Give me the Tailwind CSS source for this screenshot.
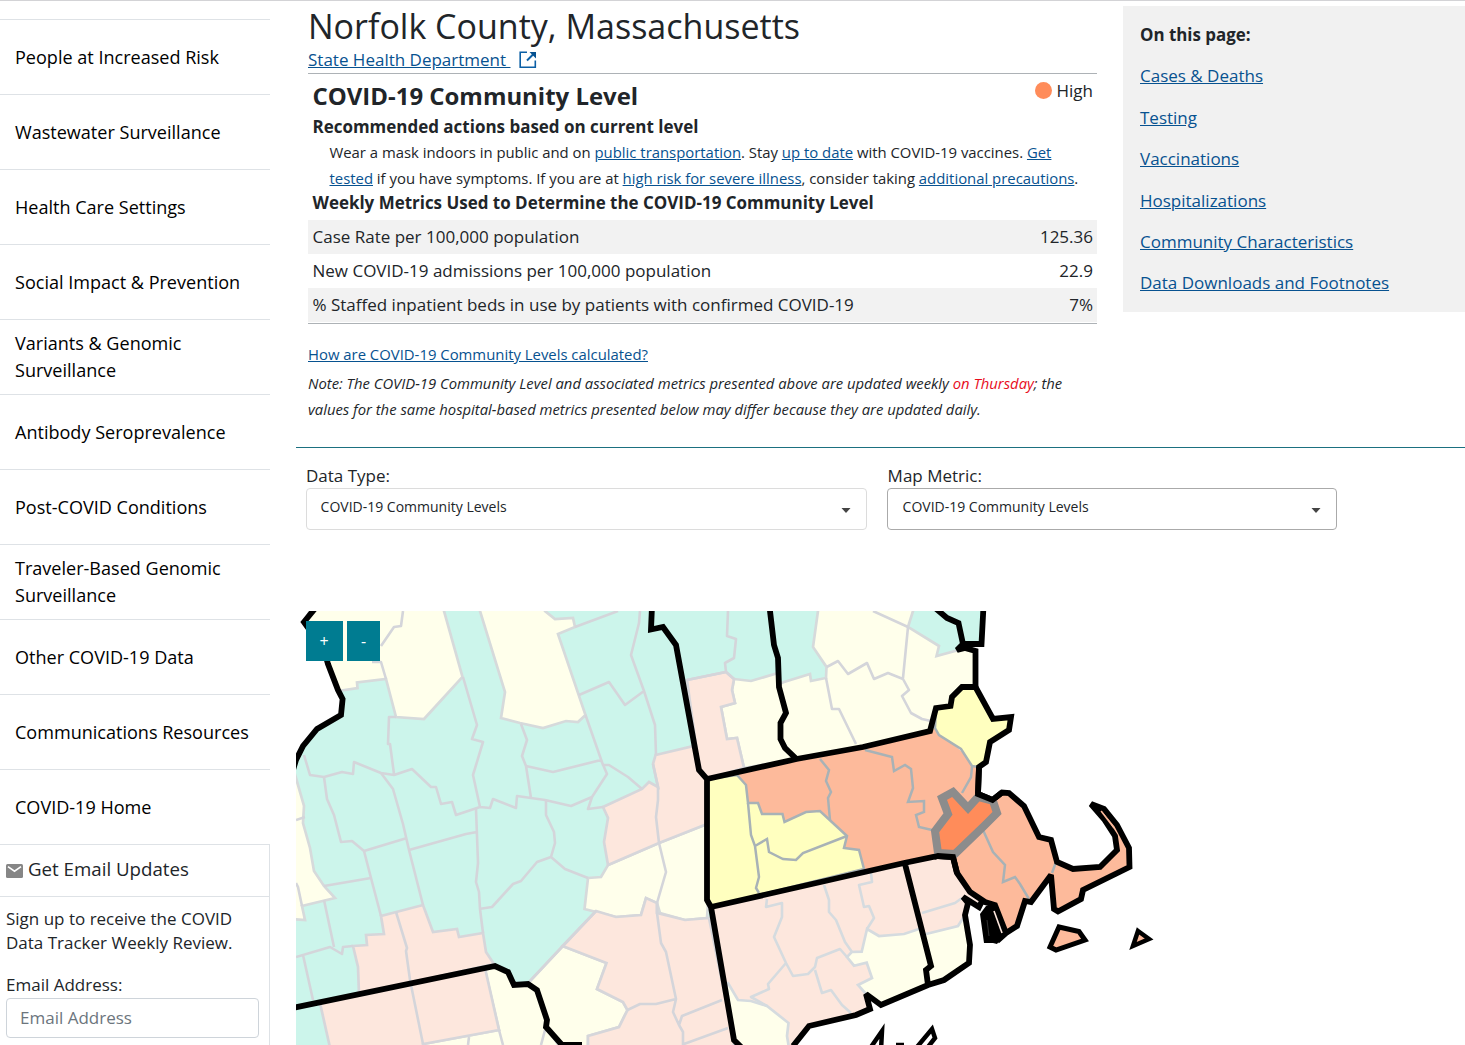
<!DOCTYPE html>
<html lang="en">
<head>
<meta charset="utf-8">
<title>COVID-19 County View</title>
<script src="https://cdn.jsdelivr.net/npm/@tailwindcss/browser@4"></script>
</head>
<body class="h-[1045px] overflow-hidden bg-white font-['Open_Sans',sans-serif] text-[17px] text-[#212529]">
<div class="flex h-[1045px] border-t border-[#d3d3d6]">
  <aside class="w-[270px] shrink-0">
    <nav class="text-[18.06px] leading-[27px] text-black">
      <div class="h-[19px] border-b border-[#dee2e6]"></div>
      <a class="flex h-[75px] items-center border-b border-[#dee2e6] px-[15px]">People at Increased Risk</a>
      <a class="flex h-[75px] items-center border-b border-[#dee2e6] px-[15px]">Wastewater Surveillance</a>
      <a class="flex h-[75px] items-center border-b border-[#dee2e6] px-[15px]">Health Care Settings</a>
      <a class="flex h-[75px] items-center border-b border-[#dee2e6] px-[15px]">Social Impact &amp; Prevention</a>
      <a class="flex h-[75px] items-center border-b border-[#dee2e6] px-[15px]">Variants &amp; Genomic<br>Surveillance</a>
      <a class="flex h-[75px] items-center border-b border-[#dee2e6] px-[15px]">Antibody Seroprevalence</a>
      <a class="flex h-[75px] items-center border-b border-[#dee2e6] px-[15px]">Post-COVID Conditions</a>
      <a class="flex h-[75px] items-center border-b border-[#dee2e6] px-[15px]">Traveler-Based Genomic<br>Surveillance</a>
      <a class="flex h-[75px] items-center border-b border-[#dee2e6] px-[15px]">Other COVID-19 Data</a>
      <a class="flex h-[75px] items-center border-b border-[#dee2e6] px-[15px]">Communications Resources</a>
      <a class="flex h-[75px] items-center border-b border-[#dee2e6] px-[15px]">COVID-19 Home</a>
    </nav>
    <section class="h-[201px] border-r border-[#dee2e6]">
      <h2 class="flex h-[52px] items-center gap-[5px] border-b border-[#dee2e6] pb-[2px] pl-[6px] text-[18.7px]">
        <svg class="mt-[3px] h-[14px] w-[17px]" viewBox="0 0 17 14"><rect width="17" height="14" rx="1.5" fill="#868686"/><path d="M2 2.6 8.5 7.2 15 2.6" fill="none" stroke="#fff" stroke-width="1.6"/></svg>
        Get Email Updates
      </h2>
      <p class="pt-[10px] pl-[6px] leading-6 whitespace-nowrap">Sign up to receive the COVID<br>Data Tracker Weekly Review.</p>
      <label class="mt-[18px] block pl-[6px] leading-6">Email Address:</label>
      <div class="mt-px ml-[6px] flex h-[40px] w-[253px] items-center rounded border border-[#ced4da] px-[13px] text-[#6c757d]">Email Address</div>
    </section>
  </aside>

  <main class="ml-[26px] flex w-[1169px] flex-col">
    <div class="flex h-[447px] border-b border-[#1b7080]">
      <section class="ml-[12px] w-[789px] shrink-0">
        <h1 class="h-[46px] text-[34px] leading-[50px] whitespace-nowrap">Norfolk County, Massachusetts</h1>
        <div class="flex h-[27px] items-center gap-[8px] border-b border-[#adb2b6] text-[17px] text-[#075290]">
          <a class="whitespace-pre underline">State Health Department </a>
          <svg class="h-[18px] w-[18px]" viewBox="0 0 18 18" fill="none" stroke="#0b5fa5"><path d="M8 1.2H1.2V16.3H16.3V9.5" stroke-width="1.6"/><path d="M8 9.5 15 2.5" stroke-width="2"/><path d="M10.5 1H17V7.5Z" fill="#075290" stroke="none"/></svg>
        </div>
        <div class="flex justify-between pr-[4px] pl-[4.5px]">
          <h2 class="h-[40px] text-[23.94px] leading-[44px] font-bold">COVID-19 Community Level</h2>
          <div class="flex h-[34px] items-center gap-[5px]"><span class="mb-px size-[17px] rounded-full bg-[#ff8c5a]"></span>High</div>
        </div>
        <h3 class="h-[26px] pl-[4.5px] text-[16.98px] leading-[26px] font-bold">Recommended actions based on current level</h3>
        <p class="-mt-px h-[53px] pl-[21.5px] text-[14.88px] leading-[26px] whitespace-nowrap">Wear a mask indoors in public and on <a class="text-[#075290] underline">public transportation</a>. Stay <a class="text-[#075290] underline">up to date</a> with COVID-19 vaccines. <a class="text-[#075290] underline">Get<br>tested</a> if you have symptoms. If you are at <a class="text-[#075290] underline">high risk for severe illness</a>, consider taking <a class="text-[#075290] underline">additional precautions</a>.</p>
        <h3 class="h-[28px] pl-[4.5px] text-[16.97px] leading-[22px] font-bold">Weekly Metrics Used to Determine the COVID-19 Community Level</h3>
        <div class="border-b border-[#adb2b6] leading-[34px]">
          <div class="flex h-[34px] justify-between bg-[#f2f2f2] pr-[4px] pl-[4.5px]"><span>Case Rate per 100,000 population</span><span>125.36</span></div>
          <div class="flex h-[34px] justify-between pr-[4px] pl-[4.5px]"><span>New COVID-19 admissions per 100,000 population</span><span>22.9</span></div>
          <div class="mb-px flex h-[34px] justify-between bg-[#f2f2f2] pr-[4px] pl-[4.5px]"><span>% Staffed inpatient beds in use by patients with confirmed COVID-19</span><span>7%</span></div>
        </div>
        <a class="mt-[17px] block text-[14.88px] leading-[26px] text-[#075290] underline">How are COVID-19 Community Levels calculated?</a>
        <p class="mt-[3px] text-[14.82px] leading-[26px] whitespace-nowrap italic">Note: The COVID-19 Community Level and associated metrics presented above are updated weekly <span class="text-[#e80c1c]">on Thursday</span>; the<br>values for the same hospital-based metrics presented below may differ because they are updated daily.</p>
      </section>
      <aside class="mt-[5px] ml-[26px] flex h-[306px] flex-1 flex-col items-start gap-[15.4px] bg-[#f1f1f1] pt-[16px] pl-[17px] leading-[26px]">
        <h2 class="text-[16.9px] font-bold">On this page:</h2>
        <a class="text-[#075290] underline">Cases &amp; Deaths</a>
        <a class="text-[#075290] underline">Testing</a>
        <a class="text-[#075290] underline">Vaccinations</a>
        <a class="text-[#075290] underline">Hospitalizations</a>
        <a class="text-[#075290] underline">Community Characteristics</a>
        <a class="text-[#075290] underline">Data Downloads and Footnotes</a>
      </aside>
    </div>

    <div class="flex h-[163px] gap-[20px] pt-[15px] pl-[10px]">
      <div class="w-[561px]">
        <label class="block h-[25px] leading-[26px]">Data Type:</label>
        <div class="flex h-[42px] items-center justify-between rounded border border-[#dcdcdc] pr-[15px] pl-[13.6px] text-sm"><span class="-mt-[5px]">COVID-19 Community Levels</span><svg class="mt-[3px] h-[5px] w-[10px]" viewBox="0 0 10 5"><path d="M.5 0h9L5 5z" fill="#444"/></svg></div>
      </div>
      <div class="w-[450px]">
        <label class="block h-[25px] pl-[0.6px] leading-[26px]">Map Metric:</label>
        <div class="flex h-[42px] items-center justify-between rounded border border-[#aaa] pr-[15px] pl-[14.6px] text-sm"><span class="-mt-[5px]">COVID-19 Community Levels</span><svg class="mt-[3px] h-[5px] w-[10px]" viewBox="0 0 10 5"><path d="M.5 0h9L5 5z" fill="#444"/></svg></div>
      </div>
    </div>

    <div class="relative h-[434px]">
      <svg class="block h-[434px] w-[1169px]" viewBox="296 611 1169 434">
        <!-- land -->
        <path fill="#ccf5eb" d="M313 611 304 622 324 650 328 664 338 690 342.6 699 341 715 317 729 303 746 296 763V1045H740L984 700V611Z"/>
        <path fill="#fff" d="M983.5 611V644H963L965 648 975.5 651V700H1100V611Z"/>
        <!-- medium, faded -->
        <g fill="#ffffeb" stroke="#d6dadb" stroke-width="2.7">
          <path d="M313 605H444V611L462.5 677 424 719 396 717 386 679 357 682.5 357.5 688 338 691 328 664 304 622Z"/>
          <path d="M478 605 480 611 505 692 501 718 520 723 543 728 566 721 578 722 585.5 715 558 634 575 627 573 618 555 619 545 611V605Z"/>
          <path d="M290 758 296 778 304 806 303 823 310 848 314 871 324 886 335 898 302 906 305 920 290 919Z"/>
          <path d="M734 679 751 681 778 673 779 687 786 713 780.5 723V739L785 748 796 759 744 768 737 738 727 739 721 707 735 703 732 690Z"/>
          <path d="M784 682 810 674 811 681 826 678 826.5 667 813 647 818 611V605H915L913 611 908 627 939 646 936.5 656 955 651 965 648 975.5 651V687H962L952 697 950 706 936 708 930 731 863 747 796 759 780.5 739V723L786 713 779 684Z"/>
          <path d="M485 970 495 966 508 972 514 985 528 984 537 990 547 1020 546 1027 562 1045V1055H423V1044L499 1030Z"/>
          <path d="M562.5 946 606.5 963 597 989 623 1002 627.5 1010 619 1027 588 1036V1050H562L546 1027 547 1020 537 990 528 984 530 981Z"/>
          <path d="M588 878 601 877 608 865 659 843 707 824 708 904 707 918 685 920 660 913 657 903 646 898 641 915 616 917 584.5 909Z"/>
        </g>
        <!-- high, faded -->
        <g fill="#fde7dd" stroke="#d6d6da" stroke-width="2.7">
          <path d="M687 680 726 672 734 679 732 690 735 703 721 707 727 739 737 738 744 768 707 779 699 768Z"/>
          <path d="M655.6 755 694 746 699 770 707 779V824L659 843 608 865 604 842 608 818 603 807 642 789 649 782 658 787 653 764Z"/>
          <path d="M353 946 367 945 366 935 384 934 381 916 423 905 433 932 457 929 459 937 483 933 486 952 494 964 359 994 358 967Z"/>
          <path d="M320 1003 485 968 499 1030 423 1044V1052H331Z"/>
          <path d="M596 911 616 917 641 915 646 898 657 903 657 913 685 920 709 918 734 1040V1050H588V1036L619 1027 627.5 1010 623 1002 597 989 606.5 963 562.5 946Z"/>
        </g>
        <path fill="#fde7dd" d="M711 907 904 863 938 856 951 857 957 873 970 892 985 902 968 903 965 915 970 945 969 963 944 980 928 985 881 1005 866 994 870 1009 856 1015 809 1026 790 1048H740L734 1040Z"/>
        <g fill="#ffffeb" stroke="#d5dbdf" stroke-width="2.7">
          <path d="M728 983 738 1000 751 1001 767 1006 788.5 1023 787 1036 789 1048H740L734 1040 726 983Z"/>
          <path d="M867 929 879 936 904 934 922 928 931 966 926 970 928 985 881 1005 866 994 858 985 872 978 866.7 962.7 854 965.7 847 957 851.7 952 861.7 951.7Z"/>
          <path d="M922 935 958 926 965 915 970 945 969 963 944 980 928 985 926 970 931 966Z"/>
        </g>
        <!-- faded county lines -->
        <g fill="none" stroke="#d4d5da" stroke-width="2.6" stroke-linejoin="round">
          <path d="M403 611 401 626 394 627 381 646M372 662H381L386 679M396 717 389 717 388 744 390 744 394 774M463 677 477 725 472 739 483 742 473 775 480 807M304 755 310 775 324 777 342 772 353 774 354 762 381 773 394 775 412 769 431 787 436 787 441 804 452 802 456 815 480 807 490 808 493 799 516 808 517 796 531 798 545 800 571 806 592 797 607 774 601 760 553 772 526 766M531 798 526 766 522 756 527 740 521 724M592 797 588 809 603 807M603 765H609L628 777 642 789M585.5 715 603 765M575 627 618 611M579 695 609 682 625 705 644 691M640 611 639 623 631 655 644 691 655 725 656 755M653 764 658 787 658 800 656 817 659 843 666 872 657 903 657 913 661 943 666 952 676 999 673 1012 679 1025 683 1032V1045M627.5 1010 640 1004 656 1004 676 999M679 1025 682 1016 722 1000M684 1044 728 1028"/>
          <path d="M546 800V815L554 832 555 843 551 857 537 862 521 881 513 884 492 907 479 909M551 857 565 869 588 878M596 911 530 981M476 809 478 863 476 882 479 892 480 909 483 933M409 850 466 834 477 832M381 773 393 789 403 824 409 850 423 905M364 851 407 838M324 777 327 799 334 815 341 842 352 841 364 851 371 878 381 916M324 886 371 878M324 900 334 947M296 957 330 947 342 954 343 947 353 946M303 955 313 1000M396 912 407 948 406 951 410 980 423 1044M469 1037 468 1045M499 1030 503 1045M545 1030 541 1045M296 883 298 887 302 906M296 820 305 817"/>
          <path d="M728 611 727 636 736 639 734 658 725 663 726 672M734 679 726 672M687 680 726 672M826.7 667 838 661 848 674 867 663 874 679 888 673 903 679 909 690 902 696 911 713 922 719 931 721M826 678 832 709H839L856 744M908 627 903 678M873 611 908 627"/>
          <path stroke="#d5dbdf" d="M767 899 766 907 782 903V917L774 937 786 963 793 976 808 974 815 967 817 958 840 949 847 957M786 963 768 984 769 989 751 997 767 1006M815 970 822 993 831 990 842 1005 851 1013M824 885 829 900V912L836 920 845 942 852 952M871 873 872 882 859 885 864 907 869 906 874 918 867 929M922 913 955 903 962 898"/>
        </g>
        <!-- Massachusetts -->
        <path fill="#fdba9b" d="M707 779 863 747 930 731 935 728 979 767 978 794 992.5 800 1002 792.5 1009 793 1024 806 1039 837 1051 840 1057 862 1073 869 1100 867 1117 850 1115 836 1103 818 1090 803 1104 809 1117 825 1129 848 1129.5 867 1083 890 1081 899 1058 911 1054 909 1051 878 1031 902 1025 901 1017 926 1006 933 995 905 985 902 970 892 957 873 951 857 938 856 904 864 711 907Z"/>
        <g fill="#ffffbf" stroke="#a8b2b6" stroke-width="2.5">
          <path d="M707 779 737 775 746 785 748 803 758 803 762 814 782.5 814 784.5 822 806 812 820 811 834 824 847 836 844 848 859 850 864 869 711 907 707 900Z"/>
          <path d="M975 687 993 719 1011 717 1009 730 990 742 986 762 979 767 972 766 961 749 939 735 935 728 936 708 950 706 952 697 962 687Z"/>
        </g>
        <path fill="none" stroke="#a8b2b6" stroke-width="2.5" d="M748 803 751 835 755 846 759 877 756 888 759 893M755 846 767 839 769 852 783 859 796 860 803 853 847 836M820 759 829 770 826 781 831 792 828 798 830 820M865 750 892 757 894 771 905 765 911 769 913 788 908 802 924 801 924 812 916 815 919 827 932 830M972 767 971 777 962 793M983 830 993 852 1005 865 1003 882 1015 877 1020 884 1029 899M1056 862 1052 873"/>
        <!-- state borders and coast -->
        <g fill="none" stroke="#000" stroke-width="5.8" stroke-miterlimit="2">
          <path d="M317 606 304 622 324 650 328 664 338 690 342.6 699 341 715 317 729 303 746 296 760 293 770"/>
          <path d="M652 606 651 629.5 663 627 676 645 699 770 707 779V900L711 907 734 1040 742 1048M707 779 796.5 759 863 747 930 731 936 708 950.5 706 952 697 962 687H975.5L993 719 1011 717 1009 730 990 742 986 762 979 767 978 794 992.5 800 1002 792.5 1009 793 1024 806 1039 837 1051 840 1057 862 1073 869 1100 867 1117 850 1115 836 1104 819 1091 804 1104 809 1117 825 1129 848 1129.5 867 1083 890 1081 899 1058 911.5 1054 909 1051 875 1031 902 1025 901 1017 926 1006 933 997 941"/>
          <path d="M770 606V611L774 645 778 658 779 687 786 713 780.5 723V739L785 748 796.5 759M934 607 947 618 958.5 623 963 644H981.5L983.5 606M963 644 957 650 965 648 975.5 651V687"/>
          <path d="M711 907 904 863 938 856 953 857 957 873 970 892 985 902 995 905 1006 933M905 864 931 966 926 970 928 985M793 1046 809 1026 856 1015 870 1009 866 994 881 1005 928 985 944 980 969 963 970 945 965 915 968 903 963 897 979 907 982 901"/>
          <path d="M290 1008.500 495 966 508 972 514 985 528 984 537 990 547 1020 546 1027 562 1045H582"/>
          <path fill="#fdba9b" stroke-width="5" d="M1059 927 1079 931.500 1085 940 1056 950 1050 947Z"/>
          <path fill="#fdba9b" stroke-width="4.500" stroke-miterlimit="5" d="M1138 931 1149 939 1133 946Z"/>
          <path stroke-width="4.500" stroke-miterlimit="5" d="M871 1047 882 1031 881 1050M917 1047 932 1029 935 1038 928 1047M896 1045H904"/>
        </g>
        <path d="M980 914 986 906 995 905 1006 932 997 944 993 943H984Z"/>
        <path d="M994 911 1002 933" stroke="#fde7dd" stroke-width="1.600" fill="none"/>
        <path d="M987 920 989 936" stroke="#555" stroke-width=".6" fill="none"/>
        <path d="M1101 811 1114 828" stroke="#fdba9b" stroke-width="1.300"/>
        <!-- selected county -->
        <path fill="#ff8c5a" stroke="#8c8c8c" stroke-width="8" d="M942 798 953 792 968 808 978 797 993 801 997 813 984 826 955 854 938 853 935 831 948 814Z"/>
        <path d="M934 857 938 856 953 857 957 873M979 767 978 794 992.500 800 1002 792.500" fill="none" stroke="#000" stroke-width="5.800"/>
      </svg>
      <div class="absolute top-[10px] left-[10px] flex gap-1 text-base text-white">
        <button class="h-[40px] w-[37px] bg-[#007c91] pr-px">+</button>
        <button class="h-[40px] w-[33px] bg-[#007c91]">-</button>
      </div>
    </div>
  </main>
</div>
</body>
</html>
